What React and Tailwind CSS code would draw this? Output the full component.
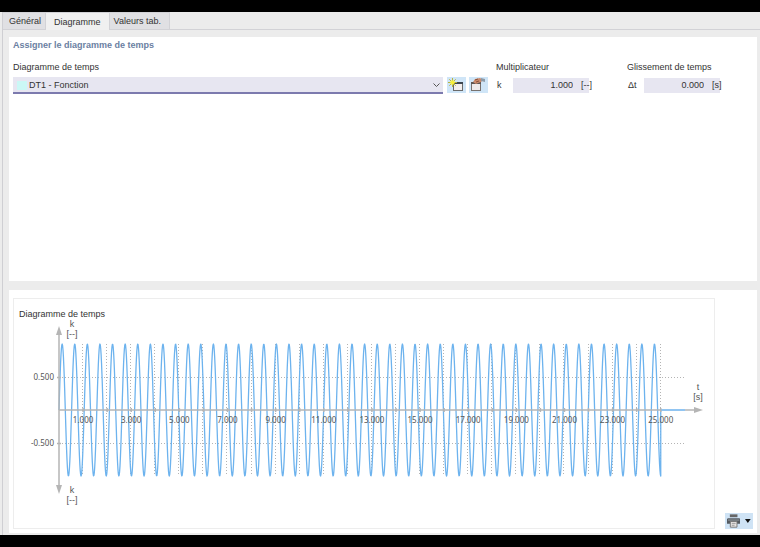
import { useState } from 'react'
import clsx from 'clsx'

const TABS = ['Général', 'Diagramme', 'Valeurs tab.']

// Plot geometry, in viewBox units
const X0 = 45
const Y0 = 111
const SEC = 24.07
const AMP = 66
const T_END = 25
const X_END = X0 + SEC * T_END

const buildWave = () => {
  const pts = []
  for (let i = 0; i <= 1500; i++) {
    const t = (T_END * i) / 1500
    pts.push(`${(X0 + t * SEC).toFixed(2)},${(Y0 - AMP * Math.sin(12 * t)).toFixed(2)}`)
  }
  return `M${pts.join('L')}V${Y0}H${X0 + 626}`
}

const WAVE = buildWave()
const SECONDS = Array.from({ length: T_END }, (_, i) => i + 1)

const TimeChart = () => (
  <svg viewBox="0 18 700 189" className="block w-full" fontFamily='"Noto Sans", sans-serif' fontSize="8" fill="#555">
    {/* grid */}
    <g stroke="#b4b4b4" strokeWidth="1" strokeDasharray="1 2">
      {SECONDS.map(s => (
        <line key={s} x1={Math.round(X0 + s * SEC) - 0.5} x2={Math.round(X0 + s * SEC) - 0.5} y1={Y0 - AMP} y2={Y0 + AMP} />
      ))}
      <line x1={X0} x2={X0 + 626} y1="78.5" y2="78.5" />
      <line x1={X0} x2={X0 + 626} y1="144.5" y2="144.5" />
    </g>

    <path d={WAVE} fill="none" stroke="#6db3ee" strokeWidth="1.3" strokeLinejoin="round" />

    {/* axes */}
    <g stroke="#b5b5b5" strokeWidth="1.5">
      <line x1={X0} x2={X0} y1="34" y2="188" />
      <line x1={X0} x2={X_END} y1={Y0} y2={Y0} />
      <line x1={X0 + 626} x2="680" y1={Y0} y2={Y0} />
      {SECONDS.map(s => (
        <line key={s} x1={X0 + s * SEC} x2={X0 + s * SEC} y1={Y0 - 2} y2={Y0 + 2} />
      ))}
      <line x1={X0 - 2} x2={X0 + 2} y1="78.5" y2="78.5" />
      <line x1={X0 - 2} x2={X0 + 2} y1="144.5" y2="144.5" />
    </g>
    <g fill="#b5b5b5">
      <path d={`M${X0} 27l3 9h-6z`} />
      <path d={`M${X0} 195l3 -9h-6z`} />
      <path d={`M689 ${Y0}l-9 -3v6z`} />
    </g>

    {/* labels */}
    <g textAnchor="middle">
      {SECONDS.filter(s => s % 2 === 1).map(s => (
        <text key={s} x={X0 + s * SEC} y="124">{s}.000</text>
      ))}
    </g>
    <g textAnchor="middle" fontFamily='"Liberation Sans", sans-serif' fontSize="9">
      <text x="58" y="28">k</text>
      <text x="58" y="38">[--]</text>
      <text x="58" y="194">k</text>
      <text x="58" y="204">[--]</text>
      <text x="684" y="91">t</text>
      <text x="684" y="101">[s]</text>
    </g>
    <g textAnchor="end">
      <text x="40" y="81">0.500</text>
      <text x="40" y="147">-0.500</text>
    </g>
  </svg>
)

const NewIcon = () => (
  <svg width="17" height="14" viewBox="0 0 17 14">
    <rect x="5.5" y="4.5" width="9" height="8" fill="#f1eeee" stroke="#6a6a6a" />
    <path d="M5 4h10v2H5z" fill="#3d4650" />
    <path d="M4.5 0v9M0 4.5h9M1.3 1.3l6.4 6.4M7.7 1.3L1.3 7.7" stroke="#b9b53c" />
    <circle cx="4.5" cy="4.5" r="2.3" fill="#f6f03c" />
  </svg>
)

const EditIcon = () => (
  <svg width="17" height="14" viewBox="0 0 17 14">
    <rect x="1.5" y="4.5" width="9" height="8" fill="#eeeaea" stroke="#77726f" />
    <path d="M1 4h10v2H1z" fill="#5d5652" />
    <path d="M3 4l2-3 5-1 3 2-2 2-3 1-2 1z" fill="#c98a6c" />
    <path d="M5 2l3-1M6 4l3-1" stroke="#8d5138" />
    <path d="M11 0l4 1v3l-4-1z" fill="#8d9ba8" />
  </svg>
)

const PrinterIcon = () => (
  <svg width="14" height="14" viewBox="0 0 14 14">
    <path d="M3 0h8v3H3z" fill="#666" />
    <path d="M0 5l1-1h12l1 1v5H0z" fill="#555b61" />
    <path d="M1 6h12" stroke="#9a9fa3" />
    <path d="M3.5 7.5h7v6h-7z" fill="#e8e4e2" stroke="#777" />
    <path d="M5 9.5h4M5 11.5h3" stroke="#999" />
  </svg>
)

const NumberField = ({ id, title, symbol, unit, value }) => (
  <div>
    <div className="h-[14px]">{title}</div>
    <div className="mt-[3px] flex h-4 items-center">
      <label htmlFor={id} className="w-[17px] pl-px">{symbol}</label>
      <input id={id} defaultValue={value} className="h-[15px] w-[76px] bg-[#e7e6f1] pr-4 text-right outline-none" />
      <span className="relative -ml-2">{unit}</span>
    </div>
  </div>
)

const App = () => {
  const [tab, setTab] = useState('Diagramme')

  return (
    <div className="flex min-h-screen flex-col bg-[#ececec] font-['Liberation_Sans',sans-serif] text-[9px] leading-[14px] text-[#333]">
      <div className="h-3 bg-black" />

      <main className="ml-[2px] flex flex-1 flex-col border-l border-[#cfcfd3]">
        {/* tabs */}
        <nav className="flex h-[18px] items-end border-b border-[#d2d2d6]">
          {TABS.map(name => (
            <button
              key={name}
              onClick={() => setTab(name)}
              className={clsx(
                'border-t border-r border-[#d2d2d6]',
                name === tab ? '-mb-px h-[18px] bg-[#f0f0f0] px-2' : 'h-[17px] bg-[#e0e0e3] px-1 first:pl-[6px] last:pr-2',
              )}
            >
              {name}
            </button>
          ))}
        </nav>

        <div className="flex flex-1 flex-col gap-[9px] pt-[7px] pr-[3px] pb-[2px] pl-[6px]">
          {/* assignment panel */}
          <section className="h-[244px] bg-white px-1 pt-px">
            <h2 className="font-bold text-[#6a80a2]">Assigner le diagramme de temps</h2>
            <div className="mt-2 flex">
              <div className="min-w-0 flex-1">
                <label htmlFor="diagram" className="block h-[14px]">Diagramme de temps</label>
                <div className="relative mt-[3px]">
                  <select id="diagram" className="block h-[17px] w-full appearance-none border-b-2 border-[#7c7aae] bg-[#e7e6f1] pl-4 outline-none">
                    <option>DT1 - Fonction</option>
                  </select>
                  <span className="absolute top-1 left-1 h-[9px] w-[10px] bg-[#cbf8f6]" />
                  <svg className="pointer-events-none absolute top-[6px] right-[3px]" width="7" height="5" viewBox="0 0 7 5" fill="none" stroke="#555">
                    <path d="M.5 .5l3 3 3-3" />
                  </svg>
                </div>
              </div>
              <div className="mt-[17px] ml-1 flex gap-[3px]">
                <button aria-label="Nouveau" className="flex h-4 w-[19px] items-center justify-center bg-[#cfe5f7]"><NewIcon /></button>
                <button aria-label="Modifier" className="flex h-4 w-[19px] items-center justify-center bg-[#cfe5f7]"><EditIcon /></button>
              </div>
              <div className="ml-2 w-[131px]">
                <NumberField id="k" title="Multiplicateur" symbol="k" unit="[--]" value="1.000" />
              </div>
              <div className="w-[126px]">
                <NumberField id="dt" title="Glissement de temps" symbol="Δt" unit="[s]" value="0.000" />
              </div>
            </div>
          </section>

          {/* chart panel */}
          <section className="flex flex-1 items-stretch gap-[10px] bg-white px-1 pt-2 pb-1">
            <div className="min-w-0 flex-1 border border-[#ededed] pt-2">
              <h3 className="h-[10px] pl-[5px]">Diagramme de temps</h3>
              <TimeChart />
            </div>
            <button aria-label="Imprimer" className="flex h-4 w-7 items-center gap-[5px] self-end bg-[#cfe3f5] px-[2px]">
              <PrinterIcon />
              <svg width="6" height="4" viewBox="0 0 6 4"><path d="M0 0h6L3 4z" fill="#111" /></svg>
            </button>
          </section>
        </div>
      </main>

      <div className="h-3 bg-black" />
    </div>
  )
}

export default App
